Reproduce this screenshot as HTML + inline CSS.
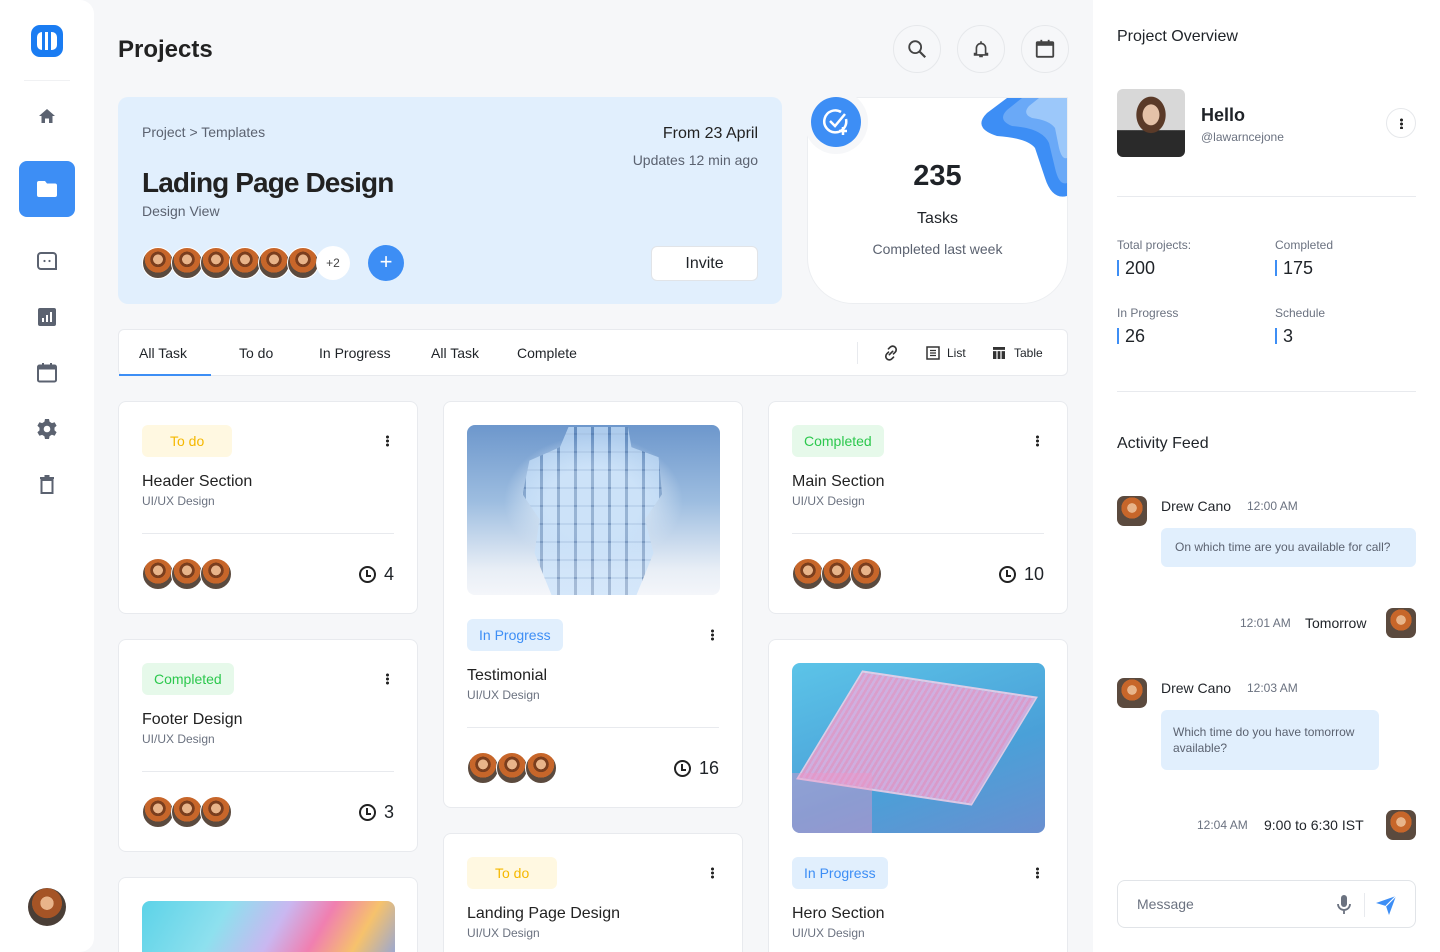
<!DOCTYPE html>
<html style="width:1440px;height:952px;overflow:hidden"><head><meta charset="utf-8">
<style>
*{margin:0;padding:0;box-sizing:border-box}
body{width:1440px;height:952px;overflow:hidden;background:#f6f7f9;font-family:"Liberation Sans",sans-serif;color:#1f2328;position:relative}
.a{position:absolute}
.side{left:0;top:0;width:94px;height:952px;background:#fff;border-radius:0 14px 14px 0}
.right{left:1093px;top:0;width:347px;height:952px;background:#fff}
.ico{position:absolute;left:35px;width:24px;height:24px}
.circ{width:48px;height:48px;border-radius:50%;border:1px solid #e6e8eb;background:#f6f7f9;display:flex;align-items:center;justify-content:center}
.av{width:32px;height:32px;border-radius:50%;border:1px solid #fff;background:radial-gradient(circle at 50% 38%,#e8b48a 0 20%,#7a3e1e 21% 32%,#c7662a 33% 55%,#5b4a3e 56%);display:inline-block;margin-right:-3px;vertical-align:middle}
.card{position:absolute;background:#fff;border:1px solid #e8eaee;border-radius:8px}
.tag{position:absolute;left:23px;top:23px;height:32px;padding:0 12px;border-radius:6px;font-size:14px;line-height:32px}
.todo{background:#fff8e1;color:#f5b800;padding:0 28px}
.comp{background:#e6f9ea;color:#2cc84d}
.prog{background:#e1effd;color:#3d8ef5}
.dots{position:absolute;right:28px;top:33px;width:3px;height:12px;background:radial-gradient(circle,#222 1.4px,transparent 1.6px) 0 0/3px 4px repeat-y}
.ct{position:absolute;left:23px;font-size:16px;color:#222}
.cs{position:absolute;left:23px;font-size:12px;color:#6b7280}
.hr{position:absolute;left:23px;right:23px;height:1px;background:#e8eaee}
.foot{position:absolute;left:23px;right:23px;height:34px;display:flex;align-items:center;justify-content:space-between}
.num{font-size:18px;display:flex;align-items:center;gap:8px}
.clock{width:17px;height:17px;border:2px solid #222;border-radius:50%;position:relative}
.clock:after{content:"";position:absolute;left:5.5px;top:2px;width:3px;height:5px;border-left:2px solid #222;border-bottom:2px solid #222}
.lbl{font-size:12px;color:#6b7280}
.val{font-size:18px;border-left:2px solid #3d8ef5;padding-left:6px;line-height:16px;margin-top:8px}
.ravatar{width:30px;height:30px;border-radius:7px;background:radial-gradient(circle at 50% 40%,#e8b48a 0 20%,#c7662a 21% 45%,#5b4a3e 46%)}
</style></head><body>
<div class="a side"></div>
<div class="a" style="left:31px;top:25px;width:32px;height:32px;border-radius:9px;background:#1a7cf2"></div>
<div class="a" style="left:37px;top:32px;width:20px;height:18px;border-radius:5px;background:#fff"></div>
<div class="a" style="left:42px;top:32px;width:3px;height:18px;background:#1a7cf2"></div>
<div class="a" style="left:48px;top:32px;width:3px;height:18px;background:#1a7cf2"></div>
<div class="a" style="left:24px;top:80px;width:46px;height:1px;background:#f0f1f3"></div>
<svg class="ico" style="top:104px" viewBox="0 0 24 24"><path d="M4 12 L12 5 L20 12 H17.5 V19 H14 V14.5 H10 V19 H6.5 V12 Z" fill="#5b6270"/></svg>
<div class="a" style="left:19px;top:161px;width:56px;height:56px;border-radius:8px;background:#3d8ef5"></div>
<svg class="ico" style="top:177px" viewBox="0 0 24 24"><path d="M2 6 a2 2 0 0 1 2-2 h6 l2 2.5 h8 a2 2 0 0 1 2 2 V18 a2 2 0 0 1-2 2 H4 a2 2 0 0 1-2-2 Z" fill="#fff"/></svg>
<svg class="ico" style="top:249px" viewBox="0 0 24 24"><path d="M6 4 h12 a3 3 0 0 1 3 3 v13 h-15 a3 3 0 0 1-3-3 v-10 a3 3 0 0 1 3-3 Z" fill="none" stroke="#5b6270" stroke-width="2"/><circle cx="9.5" cy="12" r="1.1" fill="#5b6270"/><circle cx="14.5" cy="12" r="1.1" fill="#5b6270"/></svg>
<svg class="ico" style="top:305px" viewBox="0 0 24 24"><rect x="3" y="3" width="18" height="18" rx="2" fill="#5b6270"/><rect x="7" y="13" width="2" height="4" fill="#fff"/><rect x="11" y="10" width="2" height="7" fill="#fff"/><rect x="15" y="7" width="2" height="10" fill="#fff"/></svg>
<svg class="ico" style="top:361px" viewBox="0 0 24 24"><rect x="3" y="4.5" width="18" height="16" rx="1.5" fill="none" stroke="#5b6270" stroke-width="2"/><rect x="3" y="4.5" width="18" height="4" fill="#5b6270"/><rect x="7" y="2" width="2" height="4" fill="#5b6270"/><rect x="15" y="2" width="2" height="4" fill="#5b6270"/></svg>
<svg class="ico" style="top:417px" viewBox="0 0 24 24"><path d="M10 2h4l.6 2.8 2.3 1.3 2.7-.9 2 3.5-2.1 1.9v2.7l2.1 1.9-2 3.5-2.7-.9-2.3 1.3L14 22h-4l-.6-2.8-2.3-1.3-2.7.9-2-3.5 2.1-1.9v-2.7L2.4 8.7l2-3.5 2.7.9 2.3-1.3Z" fill="#5b6270"/><circle cx="12" cy="12" r="3.3" fill="#fff"/></svg>
<svg class="ico" style="top:473px" viewBox="0 0 24 24"><path d="M6.5 7 h11 v13 h-11 Z" fill="none" stroke="#5b6270" stroke-width="2"/><path d="M5 5 h14 M9.5 3 h5" stroke="#5b6270" stroke-width="2"/></svg>
<div class="a" style="left:28px;top:888px;width:38px;height:38px;border-radius:50%;background:radial-gradient(circle at 50% 40%,#e8b48a 0 22%,#a55426 23% 50%,#4a3e36 51%)"></div>

<div class="a" style="left:118px;top:36px;font-size:24px;font-weight:600;color:#222">Projects</div>
<div class="a circ" style="left:893px;top:25px"><svg width="22" height="22" viewBox="0 0 24 24"><circle cx="10" cy="10" r="6.5" fill="none" stroke="#444" stroke-width="2"/><path d="M15 15 L21 21" stroke="#444" stroke-width="2.4"/></svg></div>
<div class="a circ" style="left:957px;top:25px"><svg width="22" height="22" viewBox="0 0 24 24"><path d="M7 17 V11 a5 5 0 0 1 10 0 V17 H19 V18.5 H5 V17 Z M12 3.5 V6" fill="none" stroke="#444" stroke-width="1.8"/><path d="M10 20 h4" stroke="#444" stroke-width="2"/></svg></div>
<div class="a circ" style="left:1021px;top:25px"><svg width="22" height="22" viewBox="0 0 24 24"><rect x="3" y="4.5" width="18" height="16" rx="1" fill="none" stroke="#444" stroke-width="2"/><rect x="3" y="4.5" width="18" height="4" fill="#444"/><rect x="7" y="2" width="2" height="4" fill="#444"/><rect x="15" y="2" width="2" height="4" fill="#444"/></svg></div>

<div class="a" style="left:118px;top:97px;width:664px;height:207px;background:#e1effd;border-radius:10px">
 <div class="a" style="left:24px;top:27px;font-size:14px;color:#5b6270">Project &gt; Templates</div>
 <div class="a" style="left:24px;top:70px;font-size:28px;font-weight:600;color:#222;letter-spacing:-0.9px">Lading Page Design</div>
 <div class="a" style="left:24px;top:106px;font-size:14px;color:#5b6270">Design View</div>
 <div class="a" style="right:24px;top:28px;font-size:16px;color:#222">From 23 April</div>
 <div class="a" style="right:24px;top:55px;font-size:14px;color:#5b6270">Updates 12 min ago</div>
 <div class="a" style="left:24px;top:149px;display:flex;align-items:center">
  <span class="av"></span><span class="av"></span><span class="av"></span><span class="av"></span><span class="av"></span><span class="av"></span>
  <span style="width:34px;height:34px;border-radius:50%;background:#fff;display:inline-flex;align-items:center;justify-content:center;font-size:12px;color:#444">+2</span>
 </div>
 <div class="a" style="left:250px;top:148px;width:36px;height:36px;border-radius:50%;background:#3d8ef5;color:#fff;font-size:22px;text-align:center;line-height:34px">+</div>
 <div class="a" style="left:533px;top:149px;width:107px;height:35px;background:#fff;border:1px solid #e1e4e8;border-radius:6px;text-align:center;line-height:33px;font-size:16px">Invite</div>
</div>

<div class="a" style="left:807px;top:97px;width:261px;height:207px;background:#fff;border:1px solid #eceef1;border-radius:22px 0 46px 46px;overflow:hidden">
 <svg class="a" style="right:0;top:0" width="90" height="100" viewBox="0 0 90 100"><path d="M30 0 H90 V98 Q75 102 68 80 L58 50 Q50 40 20 38 Q-5 30 10 15 Z" fill="#3d8ef5"/><path d="M45 0 H90 V85 Q82 88 78 70 L72 45 Q65 30 35 28 Q20 22 30 12 Z" fill="#6aa9f7"/><path d="M62 0 H90 V60 Q85 62 82 50 L78 30 Q72 22 55 20 Q45 16 52 8 Z" fill="#9cc8fa"/></svg>
 <div class="a" style="left:0;width:100%;top:62px;text-align:center;font-size:29px;font-weight:600">235</div>
 <div class="a" style="left:0;width:100%;top:112px;text-align:center;font-size:16px">Tasks</div>
 <div class="a" style="left:0;width:100%;top:143px;text-align:center;font-size:14px;color:#5b6270">Completed last week</div>
</div>
<div class="a" style="left:804px;top:90px;width:64px;height:64px;border-radius:50%;background:#f6f7f9"></div>
<div class="a" style="left:811px;top:97px;width:50px;height:50px;border-radius:50%;background:#3d8ef5"><svg width="50" height="50" viewBox="0 0 50 50"><path d="M35 22 A11 11 0 1 1 30 15" fill="none" stroke="#fff" stroke-width="2.5"/><path d="M19 24 L24 29 L34 17" fill="none" stroke="#fff" stroke-width="2.5"/><path d="M32 30 v8 M28 34 h8" stroke="#fff" stroke-width="2.5"/></svg></div>

<div class="a" style="left:118px;top:329px;width:950px;height:47px;background:#fff;border:1px solid #e8eaee;border-radius:6px;font-size:14px">
 <div class="a" style="left:20px;top:15px">All Task</div>
 <div class="a" style="left:0;top:44px;width:92px;height:2px;background:#3d8ef5"></div>
 <div class="a" style="left:120px;top:15px">To do</div>
 <div class="a" style="left:200px;top:15px">In Progress</div>
 <div class="a" style="left:312px;top:15px">All Task</div>
 <div class="a" style="left:398px;top:15px">Complete</div>
 <div class="a" style="left:738px;top:12px;width:1px;height:22px;background:#e8eaee"></div>
 <svg class="a" style="left:762px;top:13px" width="20" height="20" viewBox="0 0 24 24"><path d="M10 14 L14 10 M9 7 L11 5 a4 4 0 0 1 6 6 L15 13 M9 11 L7 13 a4 4 0 0 0 6 6 L15 17" fill="none" stroke="#333" stroke-width="2" stroke-linecap="round"/></svg>
 <svg class="a" style="left:807px;top:16px" width="14" height="14" viewBox="0 0 14 14"><rect x="1" y="1" width="12" height="12" fill="none" stroke="#333" stroke-width="1.5"/><path d="M4 4.5h6M4 7h6M4 9.5h6" stroke="#333" stroke-width="1.2"/></svg>
 <div class="a" style="left:828px;top:16px;font-size:12px">List</div>
 <svg class="a" style="left:873px;top:16px" width="14" height="14" viewBox="0 0 14 14"><rect x="1" y="1" width="12" height="12" fill="#333"/><path d="M1 4.5h12M5 4.5v9M9 4.5v9" stroke="#fff" stroke-width="1.2"/></svg>
 <div class="a" style="left:895px;top:16px;font-size:12px">Table</div>
</div>

<!-- col1 -->
<div class="card" style="left:118px;top:401px;width:300px;height:213px">
 <div class="tag todo">To do</div><div class="dots"></div>
 <div class="ct" style="top:71px">Header Section</div><div class="cs" style="top:92px">UI/UX Design</div>
 <div class="hr" style="top:131px"></div>
 <div class="foot" style="top:155px"><div><span class="av"></span><span class="av"></span><span class="av"></span></div><div class="num"><span class="clock"></span>4</div></div>
</div>
<div class="card" style="left:118px;top:639px;width:300px;height:213px">
 <div class="tag comp">Completed</div><div class="dots"></div>
 <div class="ct" style="top:71px">Footer Design</div><div class="cs" style="top:92px">UI/UX Design</div>
 <div class="hr" style="top:131px"></div>
 <div class="foot" style="top:155px"><div><span class="av"></span><span class="av"></span><span class="av"></span></div><div class="num"><span class="clock"></span>3</div></div>
</div>
<div class="card" style="left:118px;top:877px;width:300px;height:75px;border-bottom:none;border-radius:8px 8px 0 0;overflow:hidden">
 <div class="a" style="left:23px;top:23px;width:253px;height:80px;border-radius:8px;background:linear-gradient(120deg,#5cd3e8 0%,#8ee0ee 30%,#c9b7f0 50%,#f07fb0 65%,#f6c26c 80%,#7a9ef5 100%)"></div>
</div>
<!-- col2 -->
<div class="card" style="left:443px;top:401px;width:300px;height:407px">
 <div class="a" style="left:23px;top:23px;width:253px;height:170px;border-radius:8px;background:radial-gradient(ellipse at 50% 45%,#d7e6f5 0 25%,transparent 50%),linear-gradient(180deg,#6d97cc 0%,#9dbde0 45%,#e8eef6 85%,#f4f6fa 100%)"></div>
 <div class="a" style="left:65px;top:25px;width:170px;height:168px;background:repeating-linear-gradient(90deg,rgba(200,225,250,.7) 0 14px,rgba(90,130,180,.5) 14px 17px),repeating-linear-gradient(0deg,transparent 0 16px,rgba(60,90,140,.35) 16px 18px);clip-path:polygon(35% 0,70% 0,72% 12%,88% 18%,90% 40%,80% 55%,85% 75%,75% 100%,25% 100%,15% 75%,18% 55%,8% 40%,12% 20%,30% 12%)"></div>
 <div class="tag prog" style="top:217px">In Progress</div><div class="dots" style="top:227px"></div>
 <div class="ct" style="top:265px">Testimonial</div><div class="cs" style="top:286px">UI/UX Design</div>
 <div class="hr" style="top:325px"></div>
 <div class="foot" style="top:349px"><div><span class="av"></span><span class="av"></span><span class="av"></span></div><div class="num"><span class="clock"></span>16</div></div>
</div>
<div class="card" style="left:443px;top:833px;width:300px;height:119px;border-bottom:none;border-radius:8px 8px 0 0">
 <div class="tag todo">To do</div><div class="dots"></div>
 <div class="ct" style="top:71px">Landing Page Design</div><div class="cs" style="top:92px">UI/UX Design</div>
</div>
<!-- col3 -->
<div class="card" style="left:768px;top:401px;width:300px;height:213px">
 <div class="tag comp">Completed</div><div class="dots"></div>
 <div class="ct" style="top:71px">Main Section</div><div class="cs" style="top:92px">UI/UX Design</div>
 <div class="hr" style="top:131px"></div>
 <div class="foot" style="top:155px"><div><span class="av"></span><span class="av"></span><span class="av"></span></div><div class="num"><span class="clock"></span>10</div></div>
</div>
<div class="card" style="left:768px;top:639px;width:300px;height:313px;border-bottom:none;border-radius:8px 8px 0 0">
 <div class="a" style="left:23px;top:23px;width:253px;height:170px;border-radius:8px;overflow:hidden;background:linear-gradient(160deg,#5cc4e8,#4aa0d8 60%,#6a8fd0)">
  <div class="a" style="left:30px;top:20px;width:190px;height:110px;background:repeating-linear-gradient(90deg,#f29ac8 0 3px,#e6b0e0 3px 6px);opacity:.85;transform:skewX(-25deg) rotate(8deg);border:2px solid #f6d0e8"></div>
  <div class="a" style="left:-10px;top:110px;width:90px;height:60px;background:rgba(240,150,200,.4)"></div>
 </div>
 <div class="tag prog" style="top:217px">In Progress</div><div class="dots" style="top:227px"></div>
 <div class="ct" style="top:265px">Hero Section</div><div class="cs" style="top:286px">UI/UX Design</div>
</div>

<!-- right -->
<div class="a right"></div>
<div class="a" style="left:1117px;top:28px;font-size:16px">Project Overview</div>
<div class="a" style="left:1117px;top:89px;width:68px;height:68px;border-radius:6px;background:radial-gradient(ellipse at 50% 38%,#e5c2a8 0 17%,#5a3a28 18% 30%,transparent 31%),linear-gradient(180deg,#d8d8d8 0 60%,#2a2a2a 61%)"></div>
<div class="a" style="left:1201px;top:105px;font-size:18px;font-weight:600">Hello</div>
<div class="a" style="left:1201px;top:130px;font-size:12px;color:#6b7280">@lawarncejone</div>
<div class="a" style="left:1386px;top:108px;width:30px;height:30px;border-radius:50%;border:1px solid #e6e8eb"><div class="dots" style="right:12.5px;top:9px;height:11px"></div></div>
<div class="a" style="left:1117px;top:196px;width:299px;height:1px;background:#e8eaee"></div>
<div class="a" style="left:1117px;top:238px"><div class="lbl">Total projects:</div><div class="val">200</div></div>
<div class="a" style="left:1275px;top:238px"><div class="lbl">Completed</div><div class="val">175</div></div>
<div class="a" style="left:1117px;top:306px"><div class="lbl">In Progress</div><div class="val">26</div></div>
<div class="a" style="left:1275px;top:306px"><div class="lbl">Schedule</div><div class="val">3</div></div>
<div class="a" style="left:1117px;top:391px;width:299px;height:1px;background:#e8eaee"></div>
<div class="a" style="left:1117px;top:435px;font-size:16px">Activity Feed</div>

<div class="a ravatar" style="left:1117px;top:496px"></div>
<div class="a" style="left:1161px;top:498px;font-size:14px">Drew Cano</div>
<div class="a" style="left:1247px;top:499px;font-size:12px;color:#6b7280">12:00 AM</div>
<div class="a" style="left:1161px;top:528px;width:255px;height:39px;background:#e1effd;border-radius:6px;font-size:12px;color:#5b6270;line-height:39px;padding-left:14px">On which time are you available for call?</div>

<div class="a" style="left:1240px;top:616px;font-size:12px;color:#6b7280">12:01 AM</div>
<div class="a" style="left:1305px;top:615px;font-size:14px">Tomorrow</div>
<div class="a ravatar" style="left:1386px;top:608px"></div>

<div class="a ravatar" style="left:1117px;top:678px"></div>
<div class="a" style="left:1161px;top:680px;font-size:14px">Drew Cano</div>
<div class="a" style="left:1247px;top:681px;font-size:12px;color:#6b7280">12:03 AM</div>
<div class="a" style="left:1161px;top:710px;width:218px;height:60px;background:#e1effd;border-radius:6px;font-size:12px;color:#5b6270;line-height:16px;padding:14px 12px">Which time do you have tomorrow available?</div>

<div class="a" style="left:1197px;top:818px;font-size:12px;color:#6b7280">12:04 AM</div>
<div class="a" style="left:1264px;top:817px;font-size:14px">9:00 to 6:30 IST</div>
<div class="a ravatar" style="left:1386px;top:810px"></div>

<div class="a" style="left:1117px;top:880px;width:299px;height:48px;border:1px solid #e1e4e8;border-radius:8px">
 <div class="a" style="left:19px;top:15px;font-size:14px;color:#6b7280">Message</div>
 <svg class="a" style="left:216px;top:13px" width="20" height="22" viewBox="0 0 20 22"><rect x="7" y="1" width="6" height="12" rx="3" fill="#6b7280"/><path d="M4 10 a6 6 0 0 0 12 0 M10 16 v4" fill="none" stroke="#6b7280" stroke-width="1.8"/></svg>
 <div class="a" style="left:246px;top:12px;width:1px;height:24px;background:#e8eaee"></div>
 <svg class="a" style="left:256px;top:12px" width="24" height="24" viewBox="0 0 24 24"><path d="M2 10 L22 3 L15 22 L12 13 Z" fill="#3d8ef5"/><path d="M12 13 L22 3" stroke="#fff" stroke-width="1.2"/></svg>
</div>
</body></html>
